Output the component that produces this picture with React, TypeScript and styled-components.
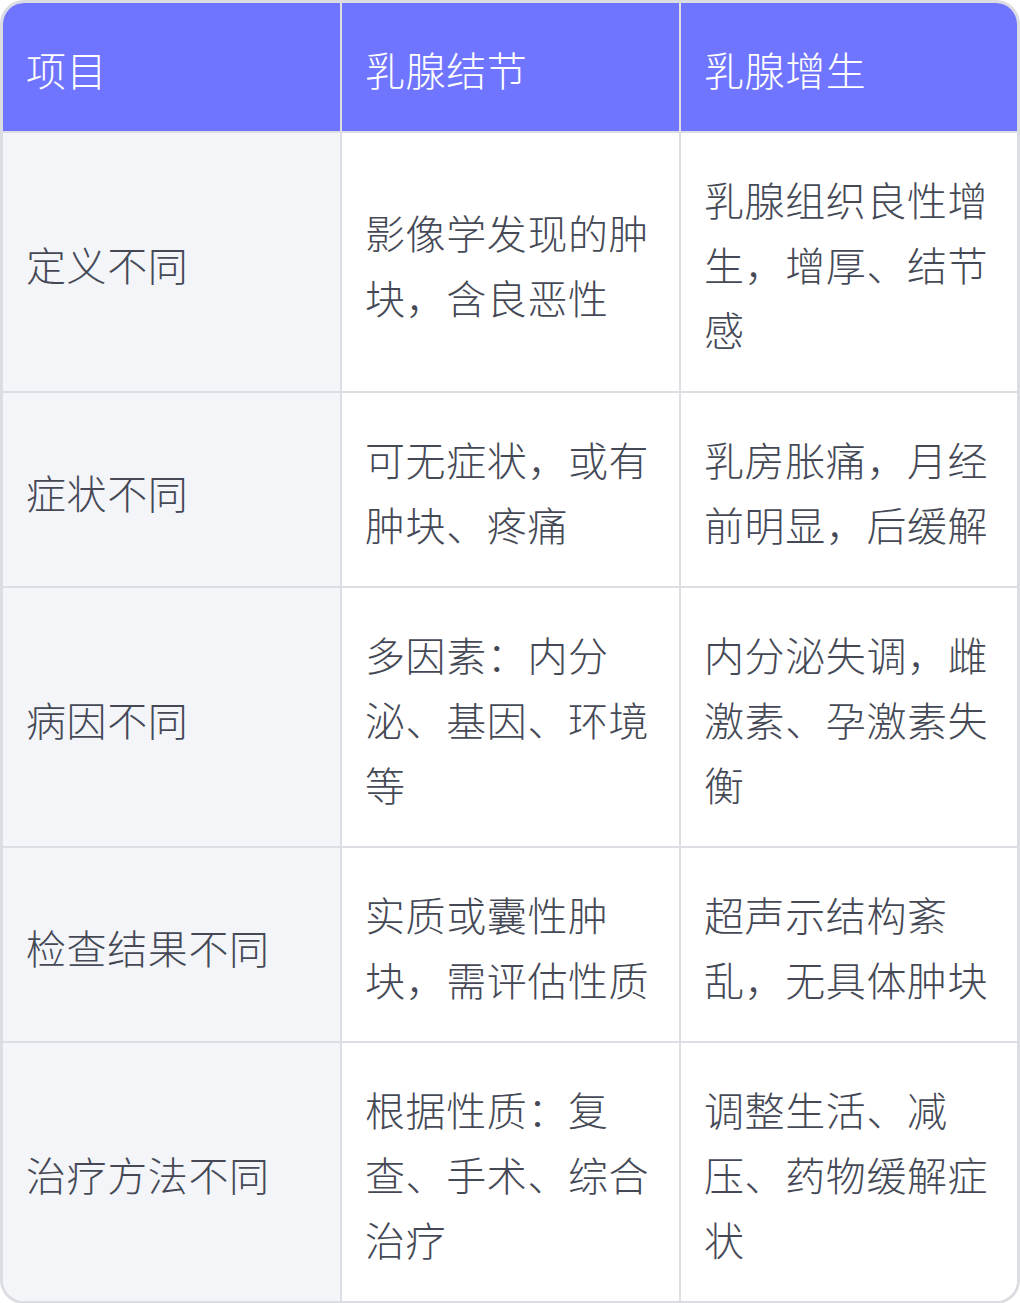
import React from 'react';
import styled, { createGlobalStyle } from 'styled-components';

const GlobalStyle = createGlobalStyle`
    html, body {
        margin: 0;
        padding: 0;
        background: #ffffff;
    }
    body {
        font-family: "Noto Sans CJK SC", "Noto Sans", sans-serif;
    }
`;

const Table = styled.div`
    width: 1020px;
    box-sizing: border-box;
    border: 3px solid #dcdde3;
    border-radius: 24px;
    overflow: hidden;
    display: grid;
    grid-template-columns: 339px 339px 336px;
`;

const Cell = styled.div<{ $head?: boolean; $first?: boolean; $last?: boolean; $bottom?: boolean }>`
    box-sizing: border-box;
    display: flex;
    align-items: center;
    padding: 34px 20px 29px 23px;
    font-size: 40px;
    font-weight: 300;
    line-height: 65px;
    letter-spacing: 0.6px;
    color: ${(p) => (p.$head ? '#ffffff' : '#454956')};
    background: ${(p) => (p.$head ? '#7075ff' : p.$first ? '#f4f5f9' : '#ffffff')};
    border-right: ${(p) => (p.$last ? 'none' : '2px solid #dcdde5')};
    border-bottom: ${(p) => (p.$bottom ? 'none' : '2px solid #dcdde5')};
    word-break: break-all;
`;

const header = ['项目', '乳腺结节', '乳腺增生'];

const rows = [
    ['定义不同', '影像学发现的肿块，含良恶性', '乳腺组织良性增生，增厚、结节感'],
    ['症状不同', '可无症状，或有肿块、疼痛', '乳房胀痛，月经前明显，后缓解'],
    ['病因不同', '多因素：内分泌、基因、环境等', '内分泌失调，雌激素、孕激素失衡'],
    ['检查结果不同', '实质或囊性肿块，需评估性质', '超声示结构紊乱，无具体肿块'],
    ['治疗方法不同', '根据性质：复查、手术、综合治疗', '调整生活、减压、药物缓解症状'],
];

const App = () => {
    return (
        <>
            <GlobalStyle />
            <Table>
                {header.map((h, i) => (
                    <Cell key={h} $head $first={i === 0} $last={i === 2}>
                        {h}
                    </Cell>
                ))}
                {rows.map((row, r) =>
                    row.map((text, i) => (
                        <Cell
                            key={`${r}-${i}`}
                            $first={i === 0}
                            $last={i === 2}
                            $bottom={r === rows.length - 1}
                        >
                            {text}
                        </Cell>
                    ))
                )}
            </Table>
        </>
    );
};

export default App;
